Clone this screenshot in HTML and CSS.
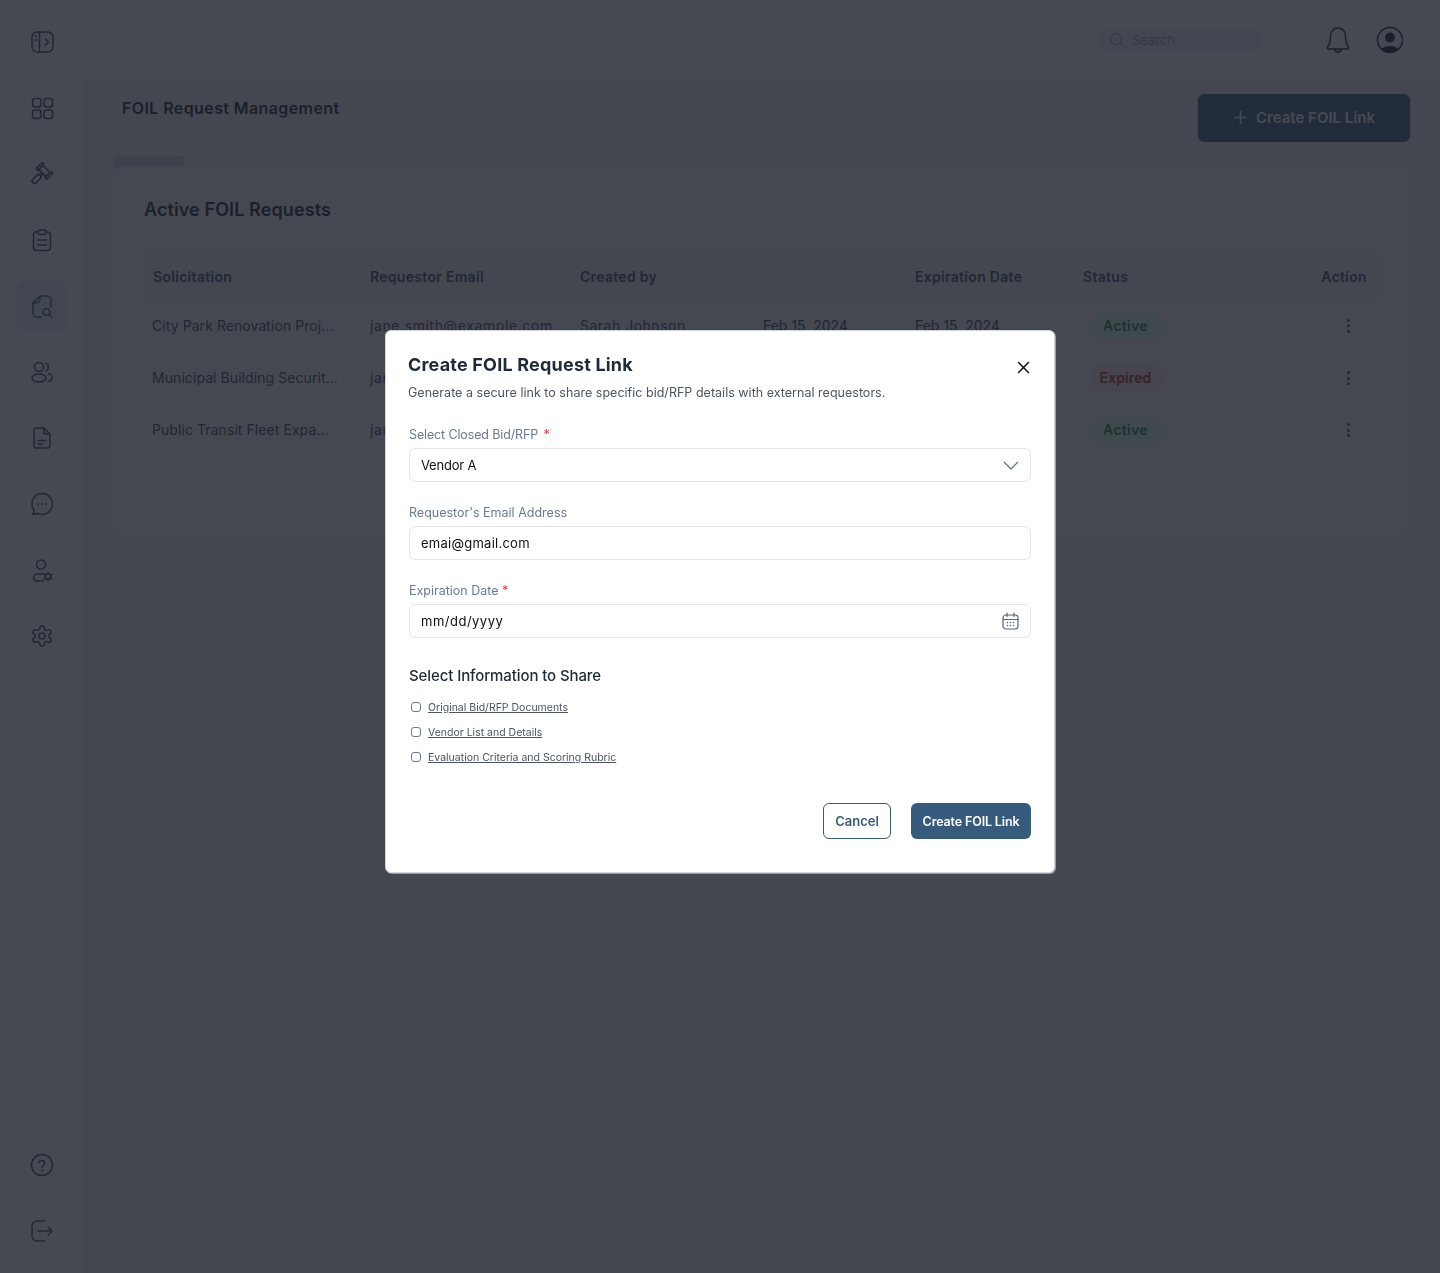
FILE: index.html
```html
<!DOCTYPE html>
<html lang="en">
<head>
    <meta charset="UTF-8">
    <meta name="viewport" content="width=device-width, initial-scale=1.0">
    <title>FOIL Request Management</title>
    <link rel="stylesheet" href="styles.css">
</head>
<body>
    <div class="app">
        <aside class="sidebar">
            <nav class="nav-top">
                <a class="nav-item"><svg viewBox="0 0 24 24"><rect x="2" y="2" width="21" height="20" rx="5"/><path d="M9.5 2v20M5 6h1.5M5 10h1.5M15.500 9l3 3-3 3"/></svg></a>
                <a class="nav-item"><svg viewBox="0 0 24 24"><rect x="2.5" y="2.5" width="8.5" height="8.5" rx="2.5"/><rect x="14" y="2.5" width="8.5" height="8.5" rx="2.5"/><rect x="2.5" y="14" width="8.5" height="8.5" rx="2.5"/><rect x="14" y="14" width="8.5" height="8.5" rx="2.5"/></svg></a>
                <a class="nav-item"><svg viewBox="0 0 24 24"><g transform="rotate(45 14.5 9)"><rect x="9.5" y="6" width="10" height="6"/><rect x="7" y="4.5" width="2.5" height="9" rx=".8"/><rect x="19.5" y="4.5" width="2.5" height="9" rx=".8"/><path d="M13.5 12v3M15.5 12v3"/><rect x="12.2" y="15" width="4.6" height="10.5" rx="2.2"/></g></svg></a>
                <a class="nav-item"><svg viewBox="0 0 24 24"><path d="M8 4H6.5a3 3 0 0 0-3 3v12.5a3 3 0 0 0 3 3h11a3 3 0 0 0 3-3V7a3 3 0 0 0-3-3H16"/><rect x="8" y="2" width="8" height="4.5" rx="2"/><path d="M7.5 12h9M7.5 17h9"/></svg></a>
                <a class="nav-item active"><svg viewBox="0 0 24 24"><path d="M11 23H7a4 4 0 0 1-4-4V9l7-7h7a4 4 0 0 1 4 4v7"/><path d="M3 9h3a4 4 0 0 0 4-4V2"/><circle cx="16.5" cy="18" r="3.3"/><path d="M19 20.5l2.500 2.500"/></svg></a>
                <a class="nav-item"><svg viewBox="0 0 24 24"><circle cx="9" cy="7" r="4.5"/><ellipse cx="9" cy="18" rx="7" ry="4"/><path d="M16 3a4.5 4.5 0 0 1 0 8M18.500 14a3.5 3.5 0 0 1 0 7"/></svg></a>
                <a class="nav-item"><svg viewBox="0 0 24 24"><path d="M6 2h8l6 6v12a2 2 0 0 1-2 2H6a2 2 0 0 1-2-2V4a2 2 0 0 1 2-2z"/><path d="M14 2v4a2 2 0 0 0 2 2h4M8 14.5h8M8 18h4.5"/></svg></a>
                <a class="nav-item"><svg viewBox="0 0 24 24"><path d="M12 1.5a10.5 10.5 0 1 1-4.5 20L3 22.5l1.2-4A10.5 10.5 0 0 1 12 1.5z"/><path class="dots" d="M8 12h.01M12 12h.01M16 12h.01"/></svg></a>
                <a class="nav-item"><svg viewBox="0 0 24 24"><circle cx="11" cy="6.5" r="4.5"/><path d="M13.5 16H7a3.5 3.5 0 0 0 0 7h6.5"/><circle cx="18" cy="18.5" r="2.8"/><path d="M18 14v1.7M18 21.3V23M14.1 16.2l1.5.9M20.4 19.9l1.5.9M14.1 20.8l1.5-.9M20.4 17.1l1.5-.9"/></svg></a>
                <a class="nav-item"><svg viewBox="0 0 24 24"><path d="M12.22 2h-.44a2 2 0 0 0-2 2v.18a2 2 0 0 1-1 1.73l-.43.25a2 2 0 0 1-2 0l-.15-.08a2 2 0 0 0-2.73.73l-.22.38a2 2 0 0 0 .73 2.73l.15.1a2 2 0 0 1 1 1.72v.51a2 2 0 0 1-1 1.74l-.15.09a2 2 0 0 0-.73 2.73l.22.38a2 2 0 0 0 2.73.73l.15-.08a2 2 0 0 1 2 0l.43.25a2 2 0 0 1 1 1.73V20a2 2 0 0 0 2 2h.44a2 2 0 0 0 2-2v-.18a2 2 0 0 1 1-1.73l.43-.25a2 2 0 0 1 2 0l.15.08a2 2 0 0 0 2.73-.73l.22-.39a2 2 0 0 0-.73-2.73l-.15-.08a2 2 0 0 1-1-1.74v-.5a2 2 0 0 1 1-1.74l.15-.09a2 2 0 0 0 .73-2.73l-.22-.38a2 2 0 0 0-2.73-.73l-.15.08a2 2 0 0 1-2 0l-.43-.25a2 2 0 0 1-1-1.73V4a2 2 0 0 0-2-2z"/><circle cx="12" cy="12" r="3"/></svg></a>
            </nav>
            <nav class="nav-bottom">
                <a class="nav-item"><svg viewBox="0 0 24 24"><circle cx="12" cy="12" r="10.5"/><path d="M9.2 9.3a2.9 2.9 0 0 1 5.6.9c0 1.9-2.8 2.4-2.8 4"/><path class="dots" d="M12 17.5h.01"/></svg></a>
                <a class="nav-item"><svg viewBox="0 0 24 24"><path d="M14.5 2H7a5 5 0 0 0-5 5v10a5 5 0 0 0 5 5h7.5"/><path d="M8 12h14M18 8l4 4-4 4"/></svg></a>
            </nav>
        </aside>

        <div class="main">
            <header class="topbar">
                <div class="search">
                    <svg viewBox="0 0 24 24"><circle cx="11" cy="11" r="7.5"/><path d="M16.5 16.5L20.500 20.500"/></svg>
                    <span>Search</span>
                </div>
                <div class="top-icons">
                    <svg class="bell" viewBox="0 0 24 28"><path d="M12 2a7.5 7.5 0 0 0-7.5 7.5c0 6.5-.8 9-2.7 11.3-.7.9-.2 2.2 1 2.2h18.400c1.200 0 1.700-1.300 1-2.200-1.900-2.300-2.700-4.800-2.700-11.300A7.5 7.5 0 0 0 12 2z"/><path d="M9 23a3 3 0 0 0 6 0"/></svg>
                    <svg class="user" viewBox="0 0 28 28"><circle cx="14" cy="14" r="12.5"/><circle class="fill" cx="14" cy="11.5" r="5"/><path class="fill" d="M5.500 23a10 6.500 0 0 1 17 0 12.500 12.500 0 0 1-17 0z"/></svg>
                </div>
            </header>

            <div class="content">
                <div class="page-head">
                    <h1>FOIL Request Management</h1>
                    <button class="btn-create">
                        <svg viewBox="0 0 16 16"><path d="M8 1v14M1 8h14"/></svg>
                        <span>Create FOIL Link</span>
                    </button>
                </div>

                <div class="tab-stub"></div>
                <section class="card">
                    <h2>Active FOIL Requests</h2>
                    <table class="requests">
                        <colgroup>
                            <col class="c-sol"><col class="c-mail"><col class="c-by"><col class="c-date"><col class="c-exp"><col class="c-status"><col>
                        </colgroup>
                        <thead>
                            <tr><th>Solicitation</th><th>Requestor Email</th><th>Created by</th><th></th><th>Expiration Date</th><th>Status</th><th class="th-action">Action</th></tr>
                        </thead>
                        <tbody>
                            <tr>
                                <td>City Park Renovation Proj...</td><td>jane.smith@example.com</td><td>Sarah Johnson</td><td>Feb 15, 2024</td><td>Feb 15, 2024</td>
                                <td><span class="badge active">Active</span></td><td><span class="kebab"><i></i><i></i><i></i></span></td>
                            </tr>
                            <tr>
                                <td>Municipal Building Securit...</td><td>jane.smith@example.com</td><td>Sarah Johnson</td><td>Feb 15, 2024</td><td>Feb 15, 2024</td>
                                <td><span class="badge expired">Expired</span></td><td><span class="kebab"><i></i><i></i><i></i></span></td>
                            </tr>
                            <tr>
                                <td>Public Transit Fleet Expa...</td><td>jane.smith@example.com</td><td>Sarah Johnson</td><td>Feb 15, 2024</td><td>Feb 15, 2024</td>
                                <td><span class="badge active">Active</span></td><td><span class="kebab"><i></i><i></i><i></i></span></td>
                            </tr>
                        </tbody>
                    </table>
                </section>
            </div>
        </div>
    </div>

    <div class="overlay">
        <div class="modal">
            <div class="modal-head">
                <div>
                    <h3>Create FOIL Request Link</h3>
                    <p>Generate a secure link to share specific bid/RFP details with external requestors.</p>
                </div>
                <svg class="close" viewBox="0 0 12 12"><path d="M1 1l10 10M11 1L1 11"/></svg>
            </div>

            <div class="form-group">
                <label class="label-tight">Select Closed Bid/RFP <span class="req req-gap">*</span></label>
                <div class="field">
                    <span class="val-vendor">Vendor A</span>
                    <svg class="chevron" viewBox="0 0 16 9"><path d="M1 1l7 7 7-7"/></svg>
                </div>
            </div>
            <div class="form-group">
                <label>Requestor's Email Address</label>
                <div class="field"><span class="val-mail">emai@gmail.com</span></div>
            </div>
            <div class="form-group">
                <label>Expiration Date <span class="req">*</span></label>
                <div class="field">
                    <span class="val-date">mm/dd/yyyy</span>
                    <svg class="calendar" viewBox="0 0 17 18"><rect x="1" y="3" width="15" height="14" rx="3"/><path d="M1 7.500h15M5 1v3.500M12 1v3.500"/><path class="dots" d="M5.500 10.500h.01M8.500 10.500h.01M11.500 10.500h.01M5.500 13.500h.01M8.500 13.500h.01M11.500 13.500h.01"/></svg>
                </div>
            </div>

            <h4>Select Information to Share</h4>
            <ul class="checks">
                <li><input type="checkbox" class="check"><a>Original Bid/RFP Documents</a></li>
                <li><input type="checkbox" class="check"><a>Vendor List and Details</a></li>
                <li><input type="checkbox" class="check"><a>Evaluation Criteria and Scoring Rubric</a></li>
            </ul>

            <div class="modal-actions">
                <button class="btn-cancel">Cancel</button>
                <button class="btn-submit">Create FOIL Link</button>
            </div>
        </div>
    </div>
</body>
</html>
```

FILE: styles.css
```css
* {
    margin: 0;
    padding: 0;
    box-sizing: border-box;
}

body {
    background: #fff;
    font-family: 'Inter', 'Liberation Sans', sans-serif;
    color: #1f2937;
    min-height: 1273px;
}

.app {
    display: flex;
    min-height: 1273px;
}

/* sidebar */
.sidebar {
    width: 84px;
    flex-shrink: 0;
    display: flex;
    flex-direction: column;
    justify-content: space-between;
    align-items: center;
    padding: 16px 0;
    background: #fff;
}

.nav-top, .nav-bottom {
    display: flex;
    flex-direction: column;
    gap: 14px;
}

.nav-item {
    width: 52px;
    height: 52px;
    display: flex;
    align-items: center;
    justify-content: center;
    border-radius: 10px;
}

.nav-item svg {
    width: 24px;
    height: 24px;
    fill: none;
    stroke: #374151;
    stroke-width: 1.5;
    stroke-linecap: round;
    stroke-linejoin: round;
}

.nav-item .dots {
    stroke-width: 2;
}

.nav-item.active {
    background: #e4ecf3;
}

.nav-item.active svg {
    stroke: #365b7c;
}

/* main area */
.main {
    flex: 1;
    background: #f1f3f5;
}

.topbar {
    height: 80px;
    background: #fff;
    border-bottom: 1px solid #e6e8ec;
    display: flex;
    align-items: center;
    justify-content: flex-end;
    padding-right: 36px;
}

.search {
    width: 160px;
    height: 26px;
    border-radius: 4px;
    background: #f3f4f6;
    display: flex;
    align-items: center;
    gap: 6px;
    padding-left: 8px;
    font-size: 13px;
    color: #9ca3af;
    margin-right: 66px;
}

.search svg {
    width: 18px;
    height: 18px;
    fill: none;
    stroke: #9ca3af;
    stroke-width: 1.4;
}

.top-icons {
    display: flex;
    align-items: center;
    gap: 26px;
}

.top-icons svg {
    fill: none;
    stroke: #111827;
    stroke-width: 1.5;
}

.bell {
    width: 24px;
    height: 28px;
}

.user {
    width: 28px;
    height: 28px;
    stroke-width: 2;
}

.top-icons .fill {
    fill: #111827;
    stroke: none;
}

.content {
    padding: 14px 30px 0;
}

.page-head {
    display: flex;
    justify-content: space-between;
    align-items: flex-start;
    padding-left: 8px;
}

.page-head h1 {
    font-size: 16px;
    line-height: 28px;
    font-weight: 600;
    letter-spacing: 0.4px;
    color: #111827;
}

.btn-create {
    width: 212px;
    height: 48px;
    background: #365b7c;
    color: #fff;
    border: none;
    border-radius: 6px;
    font-family: inherit;
    font-size: 15px;
    font-weight: 600;
    padding-bottom: 1px;
    display: flex;
    align-items: center;
    justify-content: center;
    gap: 8px;
}

.btn-create svg {
    width: 15px;
    height: 15px;
    fill: none;
    stroke: #fff;
    stroke-width: 1.6;
}

.tab-stub {
    width: 70px;
    height: 18px;
    margin: 14px 0 -8px;
    border-radius: 2px 2px 0 0;
    background: #d2d5da;
}

.card {
    position: relative;
    background: #f7f8f9;
    border-radius: 8px;
    padding: 30px 30px 78px;
}

.card h2 {
    font-size: 18px;
    line-height: 28px;
    font-weight: 600;
    letter-spacing: 0.1px;
    color: #111827;
    margin-bottom: 30px;
}

.requests {
    width: 100%;
    table-layout: fixed;
    border-collapse: collapse;
    font-size: 14px;
}

.c-sol { width: 217px; }
.c-mail { width: 210px; }
.c-by { width: 183px; }
.c-date { width: 152px; }
.c-exp { width: 168px; }
.c-status { width: 170px; }

.requests th {
    height: 46px;
    background: #f1f3f5;
    text-align: left;
    font-weight: 600;
    letter-spacing: 0.3px;
    color: #33445a;
    padding: 0 0 2px 9px;
}

.requests .th-action {
    text-align: right;
    padding-right: 13px;
}

.requests td {
    height: 52px;
    padding-left: 9px;
    line-height: 20px;
    color: #374151;
    border-bottom: 1px solid #eef0f2;
    white-space: nowrap;
    overflow: hidden;
}

.requests td:nth-child(1) {
    padding-left: 8px;
    letter-spacing: 0.07px;
}

.requests td:nth-child(2) {
    letter-spacing: 0.6px;
}

.requests td:nth-child(3) {
    letter-spacing: 0.5px;
}

.badge {
    display: block;
    width: 73px;
    height: 28px;
    line-height: 28px;
    margin-left: 8px;
    padding-right: 4px;
    border-radius: 14px;
    text-align: center;
    font-weight: 600;
    letter-spacing: 0.3px;
}

.badge.active {
    background: #dcfce7;
    color: #16803d;
}

.badge.expired {
    background: #fee2e2;
    color: #b91c1c;
    letter-spacing: 0.1px;
}

.kebab {
    display: flex;
    flex-direction: column;
    gap: 2.5px;
    width: 3px;
    margin-left: auto;
    margin-right: 30px;
}

.kebab i {
    width: 3px;
    height: 3px;
    border-radius: 50%;
    background: #374151;
}

/* modal */
.overlay {
    position: fixed;
    top: 0;
    left: 0;
    width: 100%;
    height: 100%;
    background: rgba(29, 33, 44, 0.82);
    display: flex;
    justify-content: center;
    align-items: flex-start;
    padding-top: 330px;
}

.modal {
    width: 670px;
    height: 543px;
    background: #fff;
    border: 1px solid #cfd5de;
    border-radius: 6px;
    box-shadow: 1px 1px 0 rgba(207, 213, 222, 0.6);
    padding: 20px 23px 0 22px;
    display: flex;
    flex-direction: column;
}

.modal-head {
    display: flex;
    justify-content: space-between;
    align-items: flex-start;
    margin-bottom: 23px;
}

.modal-head h3 {
    font-size: 18px;
    line-height: 28px;
    font-weight: 700;
    letter-spacing: 0.2px;
    color: #1f2937;
}

.modal-head p {
    font-size: 12.5px;
    line-height: 20px;
    letter-spacing: 0.02px;
    color: #4b5563;
    margin-top: 4px;
}

.close {
    width: 13px;
    height: 13px;
    margin: 10px 1px 0 0;
    fill: none;
    stroke: #111;
    stroke-width: 1.4;
}

.form-group {
    margin-left: 1px;
    margin-bottom: 22px;
}

.form-group label {
    display: block;
    font-size: 12.5px;
    line-height: 18px;
    color: #6b7a90;
    margin-bottom: 4px;
}

.form-group .label-tight {
    letter-spacing: -0.13px;
}

.req {
    color: #e53935;
}

.req-gap {
    margin-left: 2px;
}

.field {
    height: 34px;
    border: 1px solid #e2e5ea;
    border-radius: 6px;
    display: flex;
    align-items: center;
    justify-content: space-between;
    padding: 0 11px;
    font-size: 13px;
    color: #111;
}

.val-vendor {
    letter-spacing: -0.2px;
}

.val-mail {
    letter-spacing: 0.25px;
}

.val-date {
    letter-spacing: 0.5px;
}

.chevron {
    width: 16px;
    height: 9px;
    fill: none;
    stroke: #5b6b80;
    stroke-width: 1.2;
}

.calendar {
    width: 17px;
    height: 18px;
    fill: none;
    stroke: #56677d;
    stroke-width: 1.2;
    stroke-linecap: round;
}

.calendar .dots {
    stroke-width: 1.6;
}

.modal h4 {
    font-size: 15px;
    line-height: 22px;
    font-weight: 500;
    letter-spacing: -0.1px;
    color: #1f2937;
    margin: 5px 0 11px 1px;
}

.checks {
    list-style: none;
    margin-left: 1px;
    display: flex;
    flex-direction: column;
    gap: 7px;
}

.checks li {
    height: 18px;
    display: flex;
    align-items: center;
    gap: 7px;
    padding-left: 2px;
    font-size: 10.5px;
    color: #4b5563;
}

.checks a {
    text-decoration: underline;
}

.check {
    appearance: none;
    width: 10px;
    height: 10px;
    border: 1px solid #6b7a90;
    border-radius: 3px;
    background: #fff;
}

.modal-actions {
    margin-top: auto;
    margin-bottom: 33px;
    display: flex;
    justify-content: flex-end;
    gap: 20px;
}

.modal-actions button {
    height: 36px;
    border-radius: 6px;
    font-family: inherit;
    font-size: 13px;
    font-weight: 600;
}

.btn-cancel {
    width: 68px;
    background: #fff;
    color: #365b7c;
    border: 1px solid #365b7c;
}

.modal-actions .btn-submit {
    width: 120px;
    background: #365b7c;
    color: #fff;
    border: none;
    font-size: 12.5px;
    letter-spacing: -0.15px;
}
```
